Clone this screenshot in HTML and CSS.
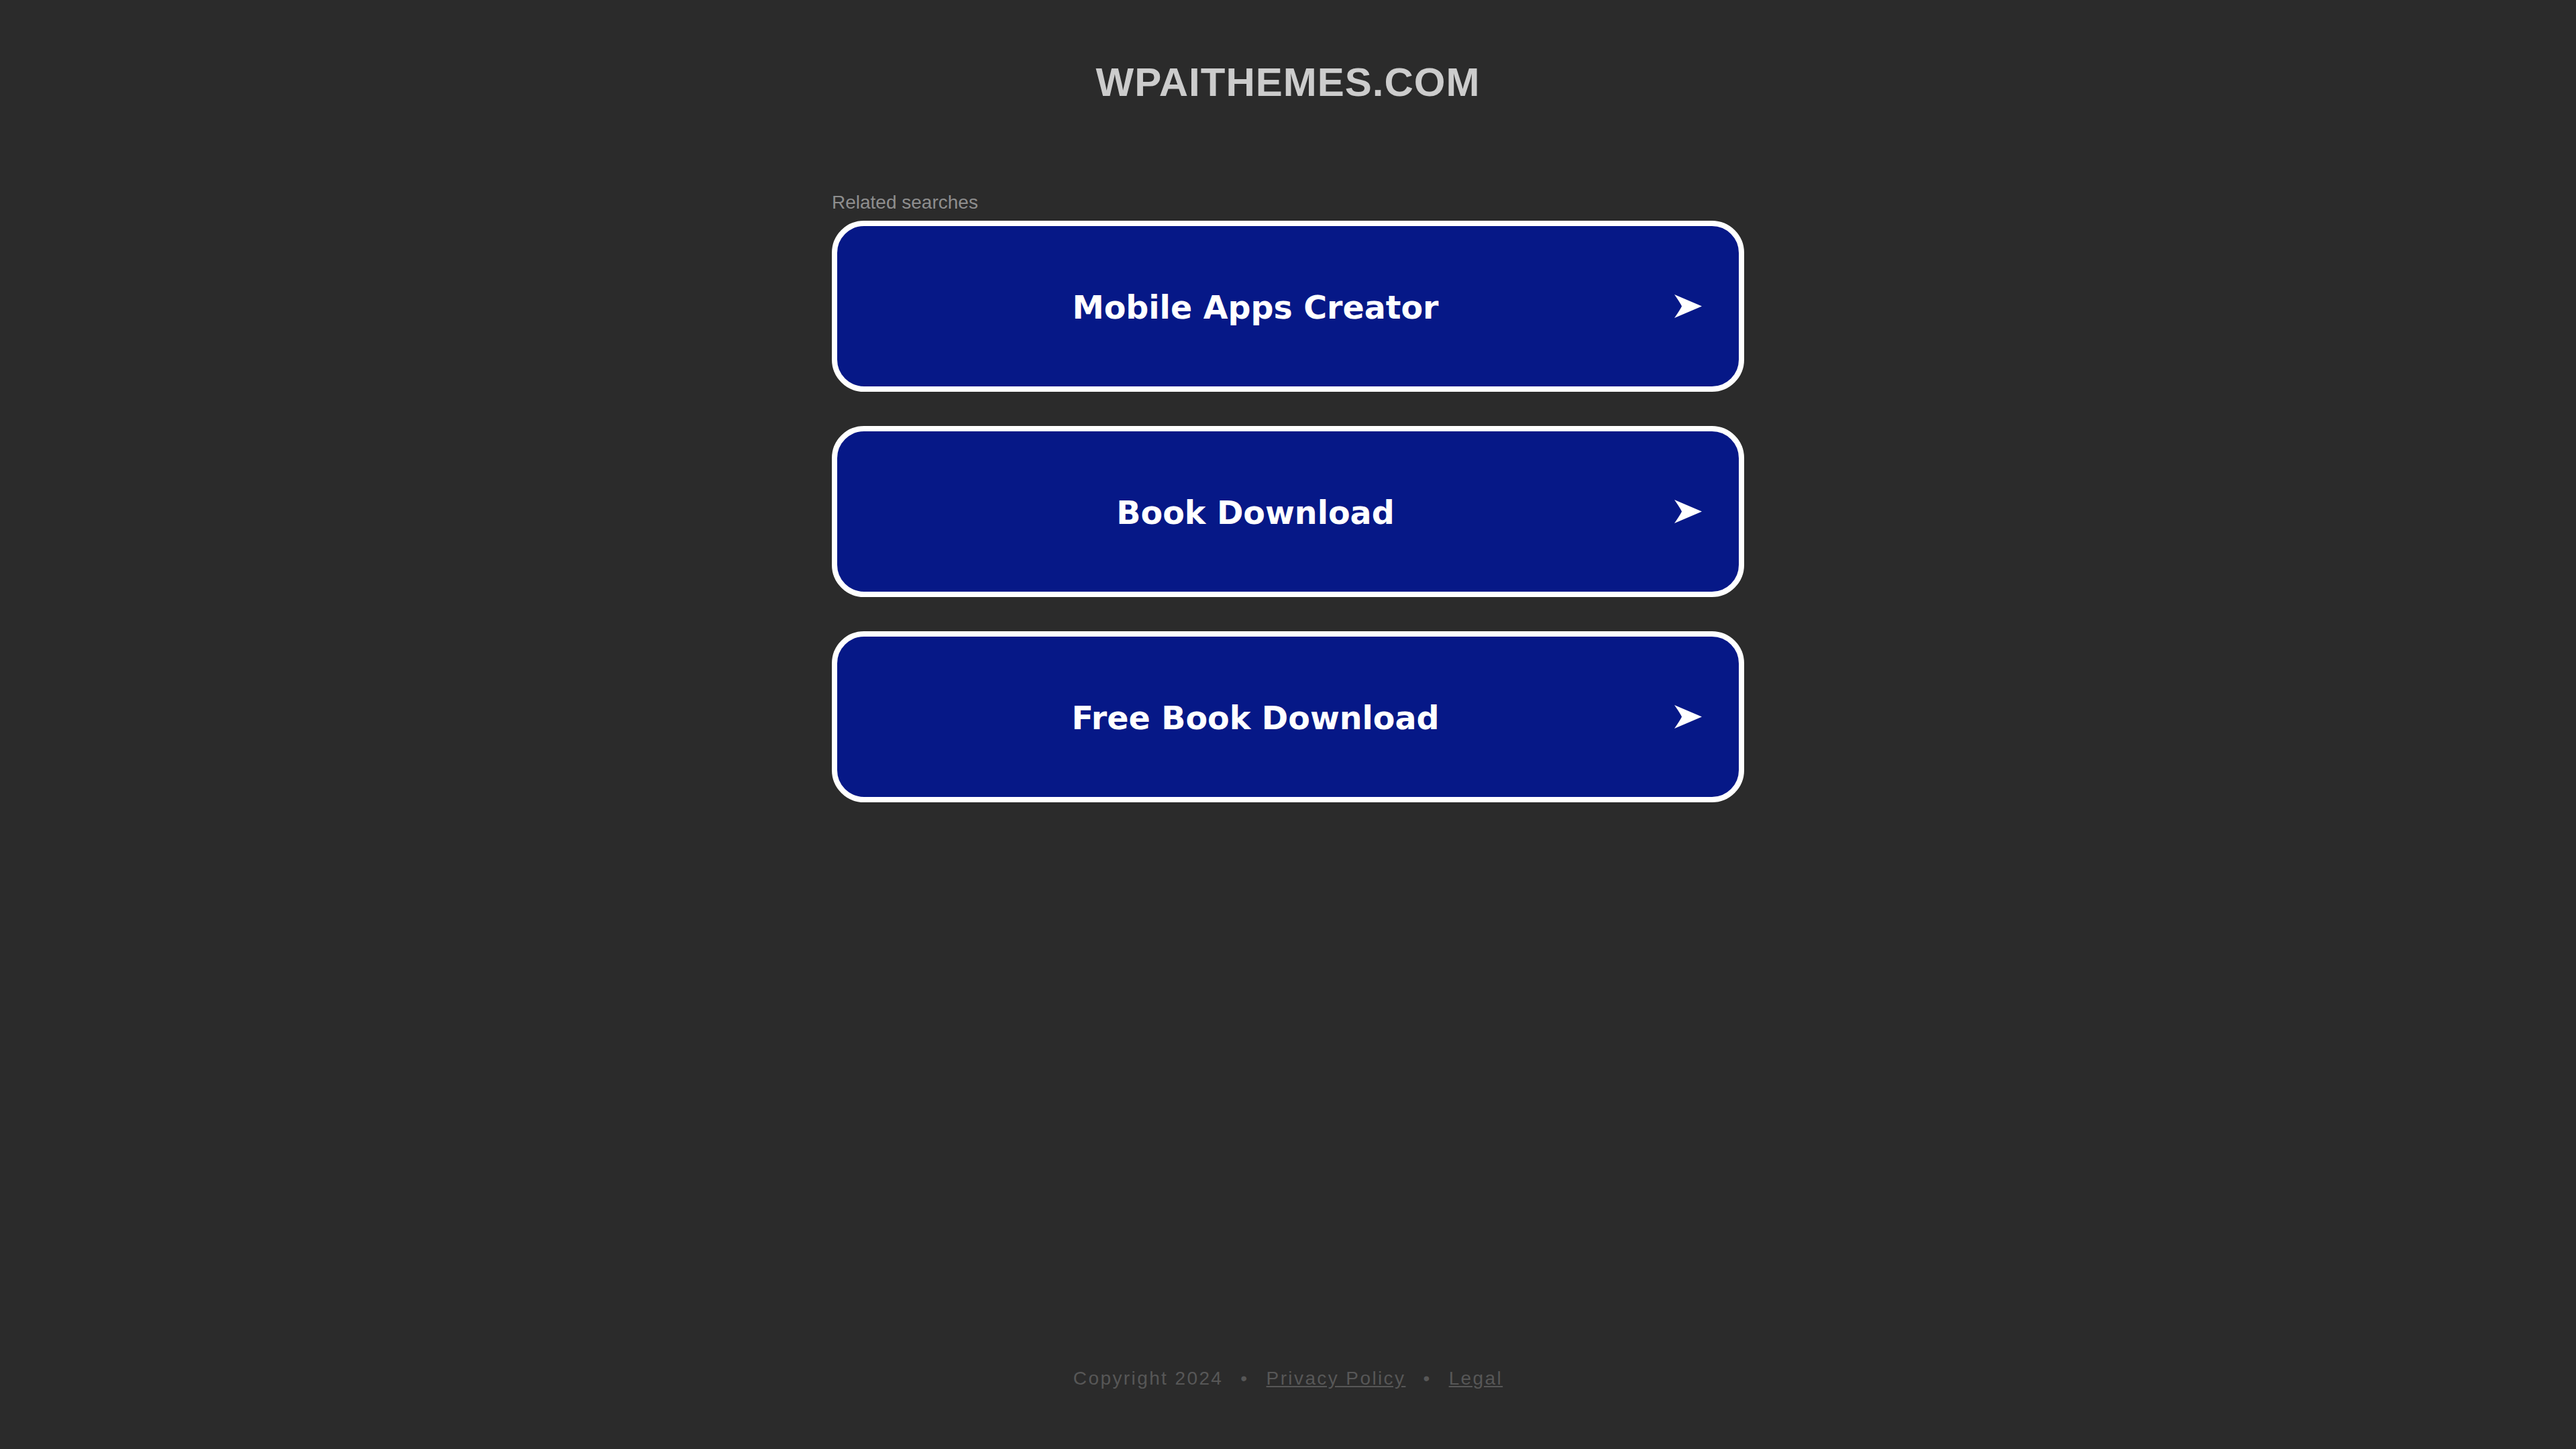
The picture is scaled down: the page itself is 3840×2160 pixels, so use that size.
FILE: index.html
```html
<!DOCTYPE html>
<html lang="en">
<head>
<meta charset="utf-8">
<title>wpaithemes.com</title>
<link rel="stylesheet" href="styles.css">
</head>
<body>
<div class="page">
  <header class="header">
    <h1 class="domain">WPAITHEMES.COM</h1>
  </header>
  <main class="content">
    <div class="label">Related searches</div>
    <div class="list">
      <a class="btn" href="#">
        <span class="btn-text">Mobile Apps Creator</span>
        <svg class="arrow" width="41" height="35" viewBox="0 0 41 35"><path d="M0 0 L41 17.5 L0 35 Q9 22 11 17.5 Q9 13 0 0 Z" fill="#fff"/></svg>
      </a>
      <a class="btn" href="#">
        <span class="btn-text">Book Download</span>
        <svg class="arrow" width="41" height="35" viewBox="0 0 41 35"><path d="M0 0 L41 17.5 L0 35 Q9 22 11 17.5 Q9 13 0 0 Z" fill="#fff"/></svg>
      </a>
      <a class="btn" href="#">
        <span class="btn-text">Free Book Download</span>
        <svg class="arrow" width="41" height="35" viewBox="0 0 41 35"><path d="M0 0 L41 17.5 L0 35 Q9 22 11 17.5 Q9 13 0 0 Z" fill="#fff"/></svg>
      </a>
    </div>
  </main>
  <footer class="footer">
    <span>Copyright 2024</span>
    <span class="sep">•</span>
    <a href="#">Privacy Policy</a>
    <span class="sep">•</span>
    <a href="#">Legal</a>
  </footer>
</div>
</body>
</html>
```

FILE: styles.css
```css
html, body {
  margin: 0;
  padding: 0;
  background: #2b2b2b;
}

.page {
  min-height: 100vh;
  display: flex;
  flex-direction: column;
  align-items: center;
  box-sizing: border-box;
  font-family: "Liberation Sans", Arial, sans-serif;
}

.header {
  padding-top: 87px;
}

.domain {
  margin: 0;
  font-family: "Liberation Sans", Arial, sans-serif;
  font-size: 60px;
  line-height: 72px;
  font-weight: 700;
  letter-spacing: 1px;
  color: #cccccc;
  text-align: center;
}

.content {
  width: 1360px;
  margin-top: 127px;
}

.label {
  font-size: 28px;
  line-height: 32px;
  color: #8e8e8e;
  margin-bottom: 11px;
}

.list {
  display: flex;
  flex-direction: column;
  gap: 51px;
}

.btn {
  box-sizing: border-box;
  height: 255px;
  display: flex;
  align-items: center;
  padding: 0 55px;
  background: #061887;
  border: 8px solid #ffffff;
  border-radius: 48px;
  text-decoration: none;
  color: #ffffff;
}

.btn-text {
  flex: 1;
  text-align: center;
  font-family: "DejaVu Sans", Verdana, sans-serif;
  font-weight: 700;
  font-size: 47.5px;
  padding-top: 3px;
  white-space: nowrap;
}

.arrow {
  flex: none;
  margin-left: 56px;
  display: block;
}

.footer {
  margin-top: auto;
  padding-bottom: 89px;
  display: flex;
  justify-content: center;
  gap: 26px;
  font-size: 28px;
  line-height: 32px;
  letter-spacing: 2.4px;
  color: #575757;
}

.footer a {
  color: #575757;
  text-decoration: underline;
}
```
